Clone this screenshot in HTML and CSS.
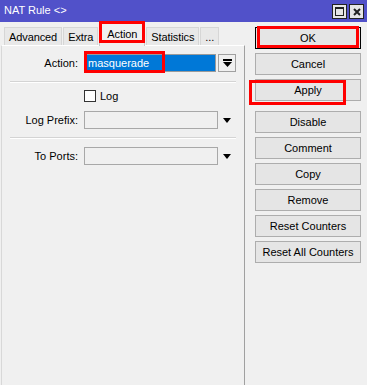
FILE: index.html
```html
<!DOCTYPE html>
<html>
<head>
<meta charset="utf-8">
<title>NAT Rule</title>
<link rel="stylesheet" href="styles.css">
</head>
<body>
<div class="win">
  <div class="win-title">
    <span class="win-title_text">NAT Rule &lt;&gt;</span>
    <div class="win-title_btns">
      <span class="win-btn">
        <svg width="9" height="9" viewBox="0 0 9 9"><rect x="0.5" y="0.5" width="8" height="8" fill="none" stroke="#222"/><rect x="0" y="0" width="9" height="2" fill="#222"/></svg>
      </span>
      <span class="win-btn">
        <svg width="8" height="8" viewBox="0 0 8 8"><path d="M1 1L7 7M7 1L1 7" stroke="#222" stroke-width="2"/></svg>
      </span>
    </div>
  </div>

  <div class="win-body">
    <div class="editor">
      <div class="tabs">
        <span class="tab">Advanced</span>
        <span class="tab">Extra</span>
        <span class="tab tab_active">Action</span>
        <span class="tab">Statistics</span>
        <span class="tab">...</span>
      </div>

      <div class="panel">
        <div class="field-row field-row_action">
          <span class="field-label">Action:</span>
          <div class="select">masquerade</div>
          <span class="dd-btn">
            <svg width="9" height="8" viewBox="0 0 9 8"><rect x="0" y="0" width="9" height="2" fill="#000"/><path d="M0 3H9L4.5 8Z" fill="#000"/></svg>
          </span>
        </div>

        <div class="sep"></div>

        <div class="field-row field-row_check">
          <span class="checkbox"></span>
          <span class="check-label">Log</span>
        </div>

        <div class="field-row field-row_prefix">
          <span class="field-label">Log Prefix:</span>
          <div class="text-input"></div>
          <span class="tri"></span>
        </div>

        <div class="sep sep_second"></div>

        <div class="field-row field-row_ports">
          <span class="field-label">To Ports:</span>
          <div class="text-input"></div>
          <span class="tri"></span>
        </div>
      </div>
    </div>

    <div class="actions">
      <span class="btn btn_default">OK</span>
      <span class="btn">Cancel</span>
      <span class="btn">Apply</span>
      <span class="btn btn_gap">Disable</span>
      <span class="btn">Comment</span>
      <span class="btn">Copy</span>
      <span class="btn">Remove</span>
      <span class="btn">Reset Counters</span>
      <span class="btn">Reset All Counters</span>
    </div>
  </div>

  <!-- red highlight boxes drawn over the window -->
  <div class="mark mark_tab"></div>
  <div class="mark mark_value"></div>
  <div class="mark mark_ok"></div>
  <div class="mark mark_apply"></div>
</div>
</body>
</html>
```

FILE: styles.css
```css
body {
  margin: 0;
  background-color: #f0f0f0;
  font-family: "Liberation Sans", Arial, sans-serif;
  font-size: 11px;
  color: #000;
}

.win {
  position: relative;
  width: 367px;
  height: 385px;
  overflow: hidden;
  background-color: #f0f0f0;
}

/* title bar */
.win-title {
  display: flex;
  align-items: center;
  justify-content: space-between;
  height: 22px;
  padding: 0 3px 0 4px;
  background-color: #5151c9;
  color: #fff;
}
.win-title_text {
  margin-top: 4px;
  margin-bottom: 1px;
  align-self: flex-start;
}
.win-title_btns {
  display: flex;
  gap: 2px;
  align-self: flex-start;
  margin-top: 4px;
}
.win-btn {
  display: flex;
  align-items: center;
  justify-content: center;
  width: 13px;
  height: 13px;
  border: 1px solid #222;
  background-color: #e6e6e6;
}

/* body */
.win-body {
  display: flex;
  height: 363px;
}

.editor {
  display: flex;
  flex-direction: column;
  width: 245px;
}

.tabs {
  display: flex;
  align-items: flex-end;
  height: 23px;
  padding-left: 4px;
}
.tab {
  display: flex;
  align-items: center;
  height: 17px;
  padding: 0 4px;
  border: 1px solid #d6d6d6;
  border-bottom: none;
  background-color: #e8e8e8;
  margin-right: 1px;
  letter-spacing: -0.1px;
}
.tab_active {
  height: 20px;
  padding: 0 7px 2px;
  margin-bottom: -1px;
  background-color: #f0f0f0;
  border-color: #c8c8c8;
  position: relative;
  z-index: 1;
}

.panel {
  flex: 1;
  margin-left: 1px;
  border-top: 1px solid #fff;
  border-left: 1px solid #d8d8d8;
  border-right: 1px solid #a0a0a0;
}

.field-row {
  display: flex;
  align-items: center;
}
.field-label {
  width: 76px;
  text-align: right;
  margin-right: 6px;
}
.field-row_action {
  height: 18px;
  margin-top: 8px;
}
.field-row_check {
  height: 12px;
  margin-top: 7px;
  padding-left: 82px;
}
.field-row_prefix {
  height: 18px;
  margin-top: 9px;
}
.field-row_ports {
  height: 18px;
  margin-top: 8px;
}

.select {
  box-sizing: border-box;
  width: 132px;
  height: 18px;
  padding-left: 3px;
  line-height: 16px;
  border: 1px solid #9a9a9a;
  background-color: #0078d7;
  color: #fff;
}
.dd-btn {
  display: flex;
  align-items: center;
  justify-content: center;
  box-sizing: border-box;
  width: 18px;
  height: 18px;
  margin-left: 2px;
  border: 1px solid #a0a0a0;
  background-color: #f0f0f0;
}

.sep {
  height: 1px;
  margin: 9px 8px 0;
  background-color: #d4d4d4;
  border-bottom: 1px solid #fff;
}
.sep_second {
  margin-top: 8px;
}

.checkbox {
  box-sizing: border-box;
  width: 12px;
  height: 12px;
  border: 1px solid #333;
  background-color: #fff;
}
.check-label {
  margin-left: 4px;
}

.text-input {
  box-sizing: border-box;
  width: 134px;
  height: 18px;
  border: 1px solid #a8a8a8;
  background-color: #f0f0f0;
}
.tri {
  width: 0;
  height: 0;
  margin-left: 5px;
  border-left: 4.5px solid transparent;
  border-right: 4.5px solid transparent;
  border-top: 5px solid #000;
}

/* right side buttons */
.actions {
  display: flex;
  flex-direction: column;
  gap: 4px;
  width: 106px;
  padding: 5px 0 0 10px;
}
.btn {
  box-sizing: border-box;
  display: flex;
  align-items: center;
  justify-content: center;
  height: 22px;
  border: 1px solid #adadad;
  background-color: #e5e5e5;
}
.btn_default {
  border-color: #000;
}
.btn_gap {
  margin-top: 6px;
}

/* red annotation boxes */
.mark {
  position: absolute;
  box-sizing: border-box;
  border: 3px solid #f00;
  z-index: 5;
}
.mark_tab {
  left: 99px;
  top: 21px;
  width: 46px;
  height: 22px;
}
.mark_value {
  left: 84px;
  top: 51px;
  width: 81px;
  height: 22px;
}
.mark_ok {
  left: 257px;
  top: 26px;
  width: 102px;
  height: 22px;
}
.mark_apply {
  left: 249px;
  top: 80px;
  width: 97px;
  height: 25px;
}
```
